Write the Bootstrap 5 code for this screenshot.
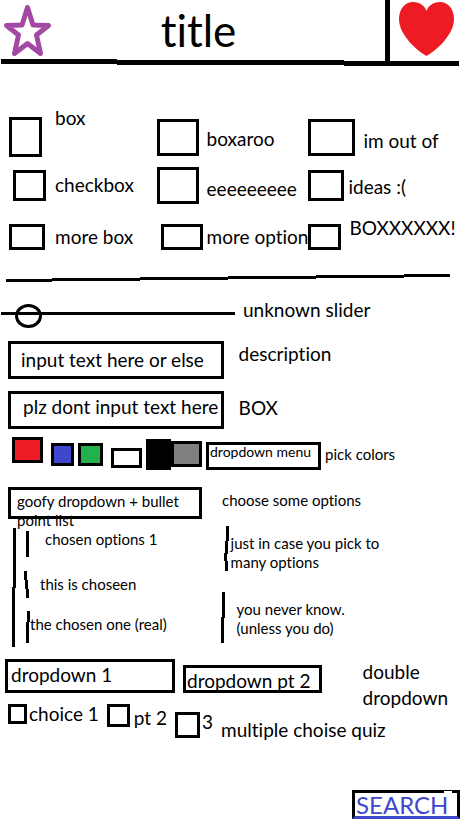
<!DOCTYPE html>
<html lang="en">
<head>
<meta charset="utf-8">
<meta name="viewport" content="width=device-width, initial-scale=1">
<title>title</title>
<link href="https://cdn.jsdelivr.net/npm/bootstrap@5.3.0/dist/css/bootstrap.min.css" rel="stylesheet">
<style>
  body { font-family: Lato, "Liberation Sans", sans-serif; font-size: 19px; line-height: 26px; font-variant-ligatures: none; color: #000; background: #fff; }
  .fine { font-size: 15px; line-height: 19px; }
  .ink { border: 3px solid #000; border-radius: 0; background-color: #fff; color: #000; }
  svg { display: block; overflow: visible; }

  .topbar h1 { font-size: 44px; line-height: 60px; }
  .like { width: 75px; height: 61px; border: 0; border-left: 5px solid #000; background: none; }
  .logo { width: 60px; }
  .underscore { margin-top: -2px; }

  .options { display: grid; grid-template-columns: 148fr 151fr 152fr; grid-template-rows: 58px 38px 38px; padding: 42px 0 0 9px; }
  .options .last { margin-top: 14px; margin-bottom: -14px; }
  .slot { width: 46px; flex: none; }
  .slot-wide { width: 50px; flex: none; }
  .tick { appearance: none; flex: none; display: block; margin: 0; position: relative; z-index: 1; }
  .tick:checked { background: #000; box-shadow: inset 0 0 0 3px #fff; }
  .w19 { width: 19px; } .w23 { width: 23px; } .w26 { width: 25px; } .w30 { width: 31px; }
  .w32 { width: 33px; } .w36 { width: 36px; } .w42 { width: 42px; } .w47 { width: 47px; }
  .h20 { height: 20px; } .h23 { height: 23px; } .h26 { height: 26px; }
  .h30 { height: 31px; } .h37 { height: 37px; } .h40 { height: 40px; }

  .rule { margin: 31px 10px 14px 5px; }
  .half { width: 51%; flex: none; }
  .slide { appearance: none; width: 234px; height: 32px; background: none; margin: 0 0 0 1px; }
  .slide::-webkit-slider-runnable-track { height: 3px; background: #000; }
  .slide::-webkit-slider-thumb { appearance: none; width: 27px; height: 24px; margin-top: -8px; border: 3px solid #000; border-radius: 50%; background: transparent; }
  .slide::-moz-range-track { height: 3px; background: #000; }
  .slide::-moz-range-thumb { width: 21px; height: 18px; border: 3px solid #000; border-radius: 50%; background: transparent; }
  .entry { display: block; width: 216px; height: 38px; padding: 0 0 2px 10px; }
  .entry.raised { padding: 0 0 8px 12px; }
  .entry::placeholder { color: #000; opacity: 1; }

  .palette { height: 34px; padding-left: 12px; }
  .swatch { flex: none; padding: 0; }
  .red { background: #ed1c24; } .blue { background: #3f48cc; } .green { background: #22b14c; }
  .black { background: #000; } .gray { background: #7f7f7f; }
  .pick { appearance: none; }
  .menu { width: 115px; height: 28px; padding: 0 0 8px 1px; font-size: 14px; line-height: 14px; }
  .goofy { width: 194px; height: 32px; padding: 2px 6px; flex: none; }

  .lists { height: 121px; margin-top: 7px; }
  .side { width: 12px; }
  .hang { margin-left: -12px; }
  .drops { height: 45px; margin-top: 12px; padding-left: 5px; }
  .drop-a { width: 170px; height: 34px; padding: 0 3px 2px; }
  .drop-b { width: 139px; height: 28px; padding: 0 1px; }
  .hug { padding-left: 2px; }
  .search { width: 108px; height: 29px; padding: 0 0 0 1px; font-size: 24px; line-height: 24px; color: #3f48cc; border-bottom-color: #3f48cc; position: relative; }
  .search::before { content: ""; position: absolute; top: -2px; right: 5px; width: 8px; height: 2px; background: #fff; }
</style>
<script src="https://cdn.jsdelivr.net/npm/bootstrap@5.3.0/dist/js/bootstrap.bundle.min.js"></script>
</head>
<body class="d-flex flex-column min-vh-100">

<header class="topbar d-flex flex-column">
  <div class="d-flex">
    <a class="logo" href="#" aria-label="Home">
      <svg width="60" height="59" viewBox="0 0 60 59" fill="none" stroke="#a349a4" stroke-width="5" stroke-linejoin="round"><path d="M27.500 7.500L22 25L6.500 25.500L18.500 35L14.500 53.500L27.500 43.500L40.500 53.500L36.500 35L48.500 25.500L33 25Z"/></svg>
    </a>
    <h1 class="m-0 pe-5 fw-normal flex-grow-1 text-center">title</h1>
    <button class="like p-0" type="button" aria-label="Like">
      <svg width="70" height="61" viewBox="0 0 70 61"><path fill="#ed1c24" d="M36.500 56C29 52 9 36 9 19C9 9 15 2 23 2C30 2 35 6 36.500 11C38 6 43 2 50 2C58 2 64 9 64 19C64 36 44 52 36.500 56Z"/></svg>
    </button>
  </div>
  <svg class="underscore w-100" height="7" viewBox="0 0 460 7" preserveAspectRatio="none"><path d="M1 0H117V1H344V2H459V7H344V6H117V5H1Z"/></svg>
</header>

<main class="flex-grow-1">
  <section class="options">
    <div class="d-flex align-items-center"><span class="slot"><input class="tick ink w32 h40" type="checkbox" id="o1"></span><label class="align-self-start lh-1" for="o1">box</label></div>
    <div class="d-flex align-items-center"><span class="slot-wide"><input class="tick ink w42 h37" type="checkbox" id="o2"></span><label class="pt-1" for="o2">boxaroo</label></div>
    <div class="d-flex align-items-center gap-2"><input class="tick ink w47 h37" type="checkbox" id="o3"><label class="pt-2" for="o3">im out of</label></div>

    <div class="d-flex align-items-center"><span class="slot ps-1"><input class="tick ink w32 h30" type="checkbox" id="o4"></span><label for="o4">checkbox</label></div>
    <div class="d-flex align-items-center"><span class="slot-wide"><input class="tick ink w42 h37" type="checkbox" id="o5"></span><label class="pt-2" for="o5">eeeeeeeee</label></div>
    <div class="d-flex align-items-center gap-1"><input class="tick ink w36 h30" type="checkbox" id="o6"><label class="pt-1" for="o6">ideas :(</label></div>

    <div class="last d-flex align-items-center"><span class="slot"><input class="tick ink w36 h26" type="checkbox" id="o7"></span><label for="o7">more box</label></div>
    <div class="last d-flex align-items-center"><span class="slot-wide ps-1"><input class="tick ink w42 h26" type="checkbox" id="o8"></span><label class="text-nowrap" for="o8">more option</label></div>
    <div class="last d-flex align-items-center gap-2"><input class="tick ink w32 h26" type="checkbox" id="o9"><label class="align-self-start lh-1" for="o9">BOXXXXXX!</label></div>
  </section>

  <div class="rule"><svg class="w-100" height="10" viewBox="0 0 445 10" preserveAspectRatio="none"><path d="M1 6H47V5H135V4H223V3H311V2H399V1H445V4H399V5H311V6H223V7H135V8H47V9H1Z"/></svg></div>

  <div class="d-flex">
    <input class="slide" type="range" id="slider" value="7">
    <label class="ps-2" for="slider">unknown slider</label>
  </div>
  <div class="d-flex mt-2 pt-1">
    <div class="half ps-2"><input class="entry ink" type="text" id="t1" placeholder="input text here or else"></div>
    <label class="ps-1" for="t1">description</label>
  </div>
  <div class="d-flex mt-2 pt-1">
    <div class="half ps-2"><input class="entry raised ink" type="text" id="t2" placeholder="plz dont input text here"></div>
    <label class="ps-1 pt-1" for="t2">BOX</label>
  </div>

  <div class="palette fine d-flex align-items-center mt-2">
    <button class="swatch ink red w30 h26 mb-2" type="button" aria-label="Red"></button>
    <button class="swatch ink blue w23 h23 ms-2" type="button" aria-label="Blue"></button>
    <button class="swatch ink green w26 h23 ms-1" type="button" aria-label="Green"></button>
    <button class="swatch ink w30 h20 mt-2 ms-2" type="button" aria-label="White"></button>
    <button class="swatch ink black w26 h30 ms-1" type="button" aria-label="Black"></button>
    <button class="swatch ink gray w30 h26 me-1" type="button" aria-label="Gray"></button>
    <select class="pick menu ink mt-1" id="colors"><option>dropdown menu</option></select>
    <label class="ps-1" for="colors">pick colors</label>
  </div>

  <div class="fine d-flex mt-3 ps-2">
    <button class="goofy ink d-flex align-items-start text-start" type="button" id="goofy">goofy dropdown + bullet point list</button>
    <label class="ps-3 pt-1 ms-1" for="goofy">choose some options</label>
  </div>

  <div class="lists fine d-flex">
    <div class="half d-flex ps-2">
      <svg class="side ms-1" height="121" viewBox="0 0 12 121"><path d="M1 2H4V62H3V121H0V61H1Z"/></svg>
      <ul class="list-unstyled m-0">
        <li class="d-flex"><svg width="5" height="45" viewBox="0 0 5 45"><path d="M2 5H5V31H2Z"/></svg><span class="ps-3 pt-1">chosen options 1</span></li>
        <li class="d-flex"><svg width="8" height="40" viewBox="0 0 8 40"><path d="M0 0H3V9H4V18H5V27H2V18H1V9H0Z"/></svg><span class="ps-2 pt-1">this is choseen</span></li>
        <li class="d-flex"><svg width="6" height="36" viewBox="0 0 6 36"><path d="M3 0H6V11H5V32H2V11H3Z"/></svg><span class="pt-1">the chosen one (real)</span></li>
      </ul>
    </div>
    <ul class="list-unstyled m-0 flex-grow-1">
      <li class="d-flex"><svg class="hang" width="8" height="66" viewBox="0 0 8 66"><path d="M3 0H6V15H5V28H4V35H5V45H2V35H1V27H2V15H3Z"/></svg><span class="pt-2">just in case you pick to<br>many options</span></li>
      <li class="d-flex"><svg class="hang" width="14" height="52" viewBox="2 0 14 52"><path d="M1 0H4V26H3V51H0V25H1Z"/></svg><span class="pt-2">you never know.<br>(unless you do)</span></li>
    </ul>
  </div>

  <div class="drops d-flex justify-content-between align-items-start">
    <div class="d-flex gap-2 align-items-end">
      <select class="pick drop-a ink" id="d1"><option>dropdown 1</option></select>
      <select class="pick drop-b ink" id="d2" aria-label="dropdown pt 2"><option>dropdown pt 2</option></select>
    </div>
    <label class="pe-2 me-1" for="d1">double<br>dropdown</label>
  </div>

  <div class="d-flex align-items-start ps-2 lh-1">
    <input class="tick ink w19 h20" type="checkbox" id="c1"><label class="hug" for="c1">choice 1</label>
    <input class="tick ink w23 h23 ms-2" type="checkbox" id="c2"><label class="ps-1 pt-1" for="c2">pt 2</label>
    <input class="tick ink w26 h26 ms-2 mt-2" type="checkbox" id="c3"><label class="hug pt-2" for="c3">3</label>
    <span class="ps-2 pt-3">multiple choise quiz</span>
  </div>
</main>

<footer class="d-flex justify-content-end">
  <button class="search ink text-start" type="button">SEARCH</button>
</footer>
</body>
</html>
